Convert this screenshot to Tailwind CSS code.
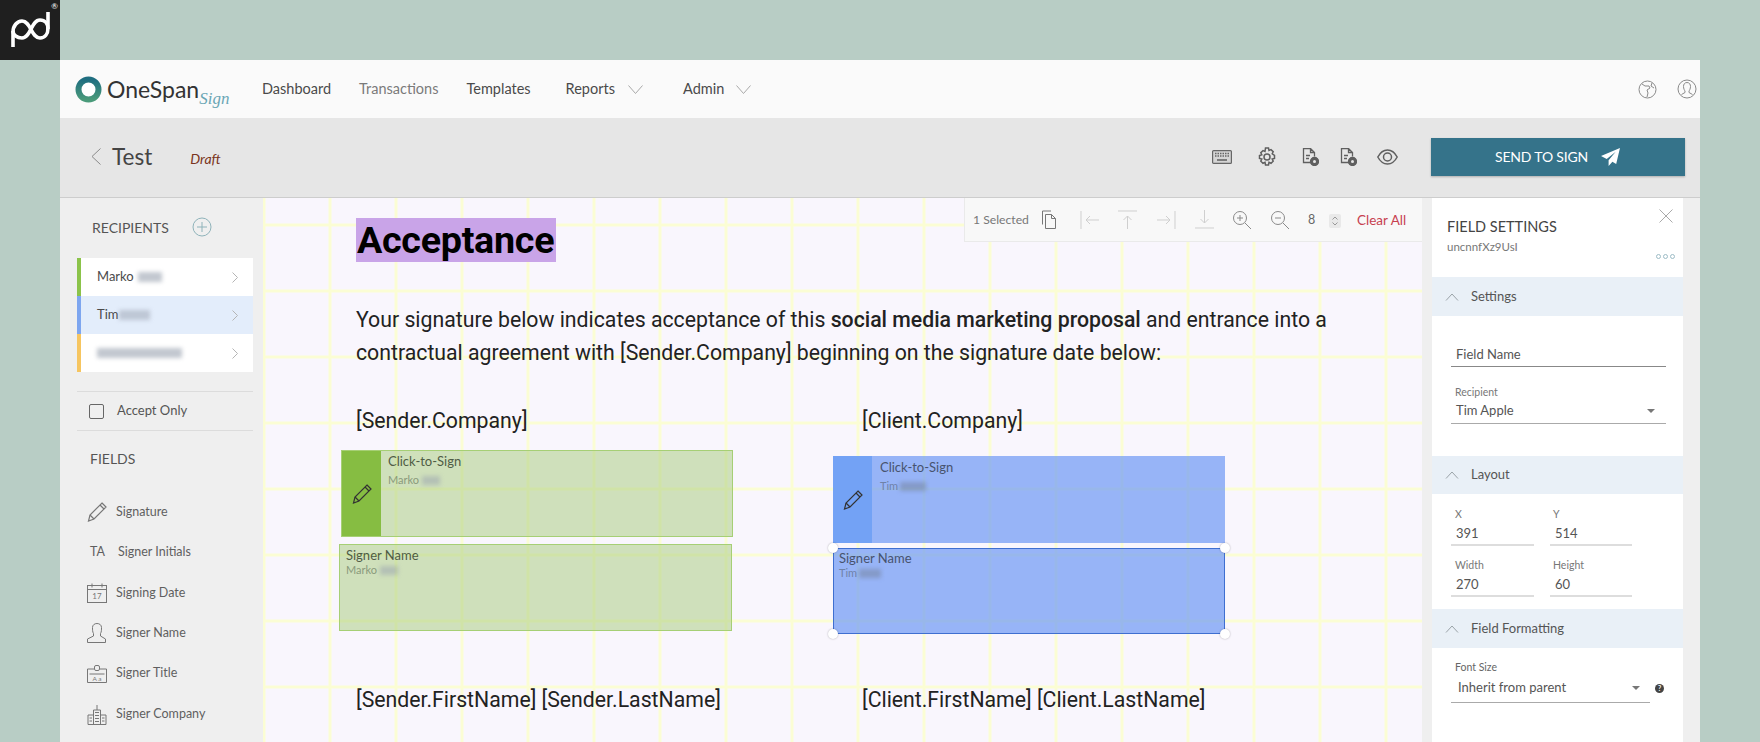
<!DOCTYPE html>
<html lang="en">
  <head>
    <meta charset="UTF-8" />
    <title>OneSpan Sign</title>
    <script src="https://cdn.jsdelivr.net/npm/@tailwindcss/browser@4"></script>
  </head>
  <body class="bg-[#b8cdc5] overflow-hidden font-['Lato','Liberation_Sans',sans-serif] text-[#4a4a4a]">
    <svg class="hidden">
      <symbol id="pencil" viewBox="0 0 20 20" fill="none" stroke="currentColor" stroke-width="1.2">
        <path d="M15 1l4 4L7 17l-5.500 2L3 13z" />
        <path d="M13 3l4 4M3 13l4 4" />
      </symbol>
      <symbol id="chev-up" viewBox="0 0 14 8" fill="none" stroke="#9aa3a8" stroke-width="1">
        <path d="M1 7.500L7 1l6 6.500" />
      </symbol>
    </svg>

    <div class="flex">
      <div class="relative w-[60px] h-[60px] bg-[#1f1f1f] shrink-0">
        <svg class="w-[60px] h-[60px]" viewBox="0 0 60 60" fill="none" stroke="#fff" stroke-width="3.600">
          <path d="M13 47V32c0-6 4-11 9-11 9 0 9 17 18 17 5 0 8-4 8-10V12" />
          <path d="M48 29c0-5-3-9-8-9-9 0-9 18-18 18-5 0-9-3-9-7" />
        </svg>
        <span class="absolute top-[1px] right-[2px] text-[8px] leading-[10px] text-white">®</span>
      </div>

      <main class="mt-[60px] w-[1640px] h-[682px] flex flex-col overflow-hidden">
        <!-- top nav -->
        <header class="h-[58px] bg-[#fafafa] flex items-center shrink-0 text-[14.5px]">
          <div class="w-[202px] pl-[15px] flex items-center shrink-0">
            <svg class="w-[27px] h-[27px] shrink-0" viewBox="0 0 27 27">
              <defs>
                <linearGradient id="ring" x1="0" y1="0" x2="0" y2="1">
                  <stop offset="0" stop-color="#1f6e80" />
                  <stop offset="1" stop-color="#4a9a7a" />
                </linearGradient>
              </defs>
              <circle cx="13.500" cy="13.500" r="10" fill="#fff" stroke="url(#ring)" stroke-width="6" />
            </svg>
            <span class="ml-[5px] text-[23px] leading-none text-[#333]">OneSpan</span>
            <span class="mt-[18px] font-['Liberation_Serif',serif] italic text-[17px] leading-none text-[#6aa6b5]">Sign</span>
          </div>
          <nav class="flex items-center">
            <a class="text-[#4a4a4a]">Dashboard</a>
            <a class="ml-[28px] text-[#7a7a7a]">Transactions</a>
            <a class="ml-[28px] text-[#4a4a4a]">Templates</a>
            <a class="ml-[35px] text-[#4a4a4a]">Reports</a>
            <svg class="ml-[13px] w-[15px] h-[9px]" viewBox="0 0 15 9" fill="none" stroke="#a8a8a8"><path d="M.5.5l7 8 7-8" /></svg>
            <a class="ml-[40px] text-[#4a4a4a]">Admin</a>
            <svg class="ml-[12px] w-[15px] h-[9px]" viewBox="0 0 15 9" fill="none" stroke="#a8a8a8"><path d="M.5.5l7 8 7-8" /></svg>
          </nav>
          <div class="ml-auto flex items-center gap-[20px] pr-[3px]">
            <svg class="w-[19px] h-[19px]" viewBox="0 0 19 19" fill="none" stroke="#8a8a8a">
              <circle cx="9.500" cy="9.500" r="8.500" />
              <path d="M4 4l3 2h4l1 2-3 2 1 3-1 4M14 3l-1 3 3 2" />
            </svg>
            <svg class="w-[20px] h-[20px]" viewBox="0 0 20 20" fill="none" stroke="#8a8a8a">
              <circle cx="10" cy="10" r="9" />
              <path d="M10 3.500c-2.500 0-3.500 2-3.500 4s1 4 1.500 4.500v1.500l-3.500 2M10 3.500c2.500 0 3.500 2 3.500 4s-1 4-1.500 4.500v1.500l3.500 2" />
            </svg>
          </div>
        </header>

        <!-- document bar -->
        <div class="h-[80px] pb-[2px] bg-[#e6e6e6] border-b border-[#cdcdcd] flex items-center shrink-0">
          <svg class="ml-[31px] w-[10px] h-[17px]" viewBox="0 0 10 17" fill="none" stroke="#8a8a8a"><path d="M9.500.5L1 8.500l8.500 8" /></svg>
          <span class="ml-[11px] mt-[2px] text-[22.5px] leading-none text-[#444]">Test</span>
          <span class="ml-[38px] mt-[4px] text-[14px] italic text-[#7a3420]">Draft</span>
          <div class="ml-auto flex items-center pr-[15.500px]">
            <svg class="w-[20px] h-[14px]" viewBox="0 0 20 14" fill="#d5d5d5" stroke="#666" stroke-width="1.200">
              <rect x=".6" y=".6" width="18.800" height="12.800" rx="1" />
              <path d="M3 3.500h14M3 6h14" stroke-dasharray="1.500 1" stroke-width="1.600" />
              <path d="M5 10h10" stroke-width="1.600" />
            </svg>
            <svg class="ml-[25px] w-[20px] h-[20px]" viewBox="0 0 20 20" fill="none" stroke="#5f5f5f" stroke-width="1.500">
              <circle cx="10" cy="10" r="3" />
              <path d="M8.500 1h3l.5 2.500 2-.9 2.200 2.100-1 2.100L17.500 8.500V11.500l-2.300.6 1 2.100-2.200 2.100-2-.9-.5 2.600h-3l-.5-2.600-2 .9-2.200-2.100 1-2.100-2.300-.6V8.500l2.300-.7-1-2.100 2.200-2.100 2 .9z" />
            </svg>
            <svg class="ml-[25px] w-[17px] h-[18px]" viewBox="0 0 17 18" fill="none" stroke="#5f5f5f" stroke-width="1.300">
              <path d="M10 14.500H1.500V.5h7l4 4v4M8.500.5v4h4M4 7.500h4M4 10.500h3" />
              <circle cx="12.500" cy="13.500" r="4" fill="#5f5f5f" />
              <circle cx="12.500" cy="13.500" r="1.500" fill="#e6e6e6" stroke="none" />
            </svg>
            <svg class="ml-[21px] w-[17px] h-[18px]" viewBox="0 0 17 18" fill="none" stroke="#5f5f5f" stroke-width="1.300">
              <path d="M10 14.500H1.500V.5h7l4 4v4M8.500.5v4h4M4 7.500h4M4 10.500h3" />
              <circle cx="12.500" cy="13.500" r="4" fill="#5f5f5f" />
              <circle cx="12.500" cy="13.500" r="1.500" fill="#e6e6e6" stroke="none" />
            </svg>
            <svg class="ml-[20px] w-[21px] h-[16px]" viewBox="0 0 21 16" fill="none" stroke="#5f5f5f" stroke-width="1.500">
              <path d="M.8 8C3.500 3 7 1 10.500 1S17.500 3 20.200 8c-2.700 5-6.200 7-9.700 7S3.500 13 .8 8z" />
              <circle cx="10.500" cy="8" r="4" />
            </svg>
            <button class="ml-[33px] w-[254px] h-[38px] bg-[#35738a] shadow-[0_1px_2px_rgba(0,0,0,0.25)] flex items-center justify-center text-white text-[14px]">
              <span class="tracking-[-0.2px]">SEND TO SIGN</span>
              <svg class="ml-[13px] w-[19px] h-[18px]" viewBox="0 0 20 19" fill="#fff"><path d="M20 0L0 8.500l6 3L15.500 4 8 13v6l4-4.500 4 2.500z" /></svg>
            </button>
          </div>
        </div>

        <div class="flex flex-1 min-h-0">
          <!-- left rail -->
          <aside class="w-[203px] shrink-0 bg-[#efefef]">
            <div class="h-[60px] pb-[2px] pl-[32px] flex items-center text-[14px] text-[#555]">
              RECIPIENTS
              <svg class="ml-[23px] w-[20px] h-[20px]" viewBox="0 0 20 20" fill="none" stroke="#8fb3ba"><circle cx="10" cy="10" r="9" /><path d="M10 5v10M5 10h10" /></svg>
            </div>
            <ul class="ml-[17px] w-[176px] text-[13px]">
              <li class="h-[38px] bg-white border-l-[4px] border-[#8bc34a] pl-[16px] pr-[15px] flex items-center">
                Marko <span class="ml-[4px] w-[24px] h-[10px] bg-gray-400/60 blur-[2px]"></span>
                <svg class="ml-auto w-[6px] h-[11px]" viewBox="0 0 6 11" fill="none" stroke="#b5b5b5"><path d="M.5.5l5 5-5 5" /></svg>
              </li>
              <li class="h-[38px] bg-[#e3edfb] border-l-[4px] border-[#7ea6ef] pl-[16px] pr-[15px] flex items-center">
                Tim <span class="ml-[1px] w-[31px] h-[10px] bg-gray-400/50 blur-[2px]"></span>
                <svg class="ml-auto w-[6px] h-[11px]" viewBox="0 0 6 11" fill="none" stroke="#b5b5b5"><path d="M.5.5l5 5-5 5" /></svg>
              </li>
              <li class="h-[38px] bg-white border-l-[4px] border-[#f6c560] pl-[16px] pr-[15px] flex items-center">
                <span class="w-[85px] h-[10px] bg-gray-400/60 blur-[2px]"></span>
                <svg class="ml-auto w-[6px] h-[11px]" viewBox="0 0 6 11" fill="none" stroke="#b5b5b5"><path d="M.5.5l5 5-5 5" /></svg>
              </li>
            </ul>
            <div class="ml-[17px] w-[176px] mt-[19px] h-[40px] border-y border-[#dcdcdc] flex items-center pl-[12px] text-[13px] text-[#555]">
              <span class="w-[15px] h-[15px] border-[1.500px] border-[#666] rounded-[2px]"></span>
              <span class="ml-[13px]">Accept Only</span>
            </div>
            <div class="h-[58px] pb-[4px] pl-[30px] flex items-center text-[14px] text-[#555]">FIELDS</div>
            <ul class="mt-[3px] pl-[27px] text-[12.500px] text-[#5f5f5f]">
              <li class="h-[40.400px] flex items-center">
                <svg class="w-[20px] h-[20px] text-[#777]"><use href="#pencil" /></svg>
                <span class="ml-[9px]">Signature</span>
              </li>
              <li class="h-[40.400px] flex items-center">
                <span class="ml-[3px] w-[28px]">TA</span>
                <span>Signer Initials</span>
              </li>
              <li class="h-[40.400px] flex items-center">
                <svg class="w-[20px] h-[20px]" viewBox="0 0 20 20" fill="none" stroke="#777">
                  <rect x=".5" y="2.500" width="19" height="17" />
                  <path d="M.5 6.500h19M5 .5v4M15 .5v4" />
                  <text x="10" y="16" text-anchor="middle" font-size="8" fill="#777" stroke="none">17</text>
                </svg>
                <span class="ml-[9px]">Signing Date</span>
              </li>
              <li class="h-[40.400px] flex items-center">
                <svg class="w-[20px] h-[20px]" viewBox="0 0 20 20" fill="none" stroke="#777">
                  <path d="M6.500 10.500c-1-1.500-1-4-1-6 0-2.500 2-4 4.500-4s4.500 1.500 4.500 4c0 2 0 4.500-1 6v2.500l5 3v3.500H.5V16l6-3z" />
                </svg>
                <span class="ml-[9px]">Signer Name</span>
              </li>
              <li class="h-[40.400px] flex items-center">
                <svg class="w-[20px] h-[18px]" viewBox="0 0 20 18" fill="none" stroke="#777">
                  <path d="M7 4H.5v13.500h19V4H13" />
                  <rect x="7.500" y=".5" width="5" height="5" rx="1.500" />
                  <path d="M2.500 9h15" />
                  <text x="10" y="15.500" text-anchor="middle" font-size="6.500" fill="#777" stroke="none">A a</text>
                </svg>
                <span class="ml-[9px]">Signer Title</span>
              </li>
              <li class="h-[40.400px] flex items-center">
                <svg class="w-[20px] h-[21px]" viewBox="0 0 20 21" fill="none" stroke="#777">
                  <path d="M6.500 20.500V6h7v14.500M10 1v5M8 8.500h4M8 11.500h4M8 14.500h4M8 17.500h4" />
                  <path d="M6.500 11H1v9.500h18V11h-5.500M2.500 14h2.500M2.500 17h2.500M15 14h2.500M15 17h2.500" />
                </svg>
                <span class="ml-[9px]">Signer Company</span>
              </li>
            </ul>
          </aside>

          <!-- document canvas -->
          <section class="relative w-[1159px] shrink-0 overflow-hidden bg-[#f9f6fd] bg-[linear-gradient(to_right,#fbfdd4_3px,transparent_3px),linear-gradient(to_bottom,#fbfdd4_3px,transparent_3px)] bg-[size:66px_66px] bg-[position:-0.5px_25.5px] pl-[93px] pt-[20px] font-['Roboto',sans-serif] text-[#222]">
            <h1 class="inline-block align-top h-[44px] pl-[1px] pr-[2px] bg-[#c9a4e8] font-['Roboto',sans-serif] font-bold text-[37.700px] leading-[44px] tracking-[-0.3px] text-black">Acceptance</h1>
            <p class="mt-[40.500px] text-[21.250px] leading-[33px]">
              Your signature below indicates acceptance of this <b class="font-medium">social media marketing proposal</b> and entrance into a<br />
              contractual agreement with [Sender.Company] beginning on the signature date below:
            </p>
            <div class="mt-[35px] grid grid-cols-[506px_1fr] text-[21.250px] leading-[33px]">
              <span>[Sender.Company]</span>
              <span>[Client.Company]</span>
            </div>
            <div class="mt-[246px] grid grid-cols-[506px_1fr] text-[21.250px] leading-[33px]">
              <span>[Sender.FirstName] [Sender.LastName]</span>
              <span>[Client.FirstName] [Client.LastName]</span>
            </div>

            <!-- placed signature fields -->
            <div class="absolute left-[78px] top-[252px] w-[392px] h-[87px] bg-[#a5c97a]/50 border border-[#a6cf75] flex font-['Lato',sans-serif]">
              <div class="w-[39px] shrink-0 bg-[#86bd42] flex items-center justify-center text-[#333]">
                <svg class="w-[20px] h-[20px]"><use href="#pencil" /></svg>
              </div>
              <div class="pl-[7px] pt-[2px]">
                <div class="text-[13px] leading-[16px] text-[#4f5c45]">Click-to-Sign</div>
                <div class="mt-[3px] text-[11px] leading-[16px] text-[#8a9a7c] flex items-center">Marko <span class="ml-[3px] w-[18px] h-[9px] bg-gray-400/50 blur-[2px]"></span></div>
              </div>
            </div>
            <div class="absolute left-[76px] top-[346px] w-[393px] h-[87px] bg-[#a5c97a]/50 border border-[#a6cf75] pl-[6px] pt-[2px] font-['Lato',sans-serif]">
              <div class="text-[13px] leading-[16px] text-[#4f5c45]">Signer Name</div>
              <div class="text-[11px] leading-[14px] text-[#8a9a7c] flex items-center">Marko <span class="ml-[3px] w-[18px] h-[9px] bg-gray-400/50 blur-[2px]"></span></div>
            </div>

            <div class="absolute left-[570px] top-[258px] w-[392px] h-[87px] bg-[#6d98f4]/70 flex font-['Lato',sans-serif]">
              <div class="w-[39px] shrink-0 bg-[#73a2f5] flex items-center justify-center text-[#333]">
                <svg class="w-[20px] h-[20px]"><use href="#pencil" /></svg>
              </div>
              <div class="pl-[8px] pt-[3px]">
                <div class="text-[13px] leading-[16px] text-[#47536e]">Click-to-Sign</div>
                <div class="mt-[3px] text-[11px] leading-[16px] text-[#6f82a8] flex items-center">Tim <span class="ml-[2px] w-[26px] h-[9px] bg-gray-500/40 blur-[2px]"></span></div>
              </div>
            </div>
            <div class="absolute left-[570px] top-[350px] w-[392px] h-[86px] bg-[#6d98f4]/70 border-[1.500px] border-[#3f6fd0] pl-[5px] pt-[1px] font-['Lato',sans-serif]">
              <div class="text-[13px] leading-[16px] text-[#47536e]">Signer Name</div>
              <div class="text-[11px] leading-[14px] text-[#6f82a8] flex items-center">Tim <span class="ml-[2px] w-[22px] h-[9px] bg-gray-500/40 blur-[2px]"></span></div>
              <span class="absolute -left-[6px] -top-[6px] w-[10px] h-[10px] rounded-full bg-white shadow-[0_0_2px_rgba(0,0,0,0.3)]"></span>
              <span class="absolute -right-[6px] -top-[6px] w-[10px] h-[10px] rounded-full bg-white shadow-[0_0_2px_rgba(0,0,0,0.3)]"></span>
              <span class="absolute -left-[6px] -bottom-[6px] w-[10px] h-[10px] rounded-full bg-white shadow-[0_0_2px_rgba(0,0,0,0.3)]"></span>
              <span class="absolute -right-[6px] -bottom-[6px] w-[10px] h-[10px] rounded-full bg-white shadow-[0_0_2px_rgba(0,0,0,0.3)]"></span>
            </div>

            <!-- floating selection toolbar -->
            <div class="absolute top-0 right-0 w-[458px] h-[44px] bg-[#f8f8f8] border-l border-b border-[#eaeaea] flex items-center pl-[8px] font-['Lato',sans-serif] text-[#777]">
              <span class="mt-[2px] text-[12.200px] w-[59px]">1 Selected</span>
              <svg class="ml-[9px] w-[16px] h-[19px]" viewBox="0 0 16 19" fill="none" stroke="#777"><path d="M10 1H1.500v13.500M4.500 4.500h6l4 4v10h-10zM10.500 4.500v4h4" /></svg>
              <svg class="ml-[23px] w-[20px] h-[18px]" viewBox="0 0 20 18" fill="none" stroke="#cfcfcf"><path d="M1 0v18M19 9H6M10 5L6 9l4 4" /></svg>
              <svg class="ml-[18px] w-[19px] h-[19px]" viewBox="0 0 19 19" fill="none" stroke="#cfcfcf"><path d="M0 1h19M9.500 19V6M5.500 10l4-4 4 4" /></svg>
              <svg class="ml-[19px] w-[20px] h-[18px]" viewBox="0 0 20 18" fill="none" stroke="#cfcfcf"><path d="M19 0v18M1 9h13M10 5l4 4-4 4" /></svg>
              <svg class="ml-[19px] w-[19px] h-[19px]" viewBox="0 0 19 19" fill="none" stroke="#cfcfcf"><path d="M0 18h19M9.500 0v13M5.500 9l4 4 4-4" /></svg>
              <svg class="ml-[18px] w-[20px] h-[20px]" viewBox="0 0 20 20" fill="none" stroke="#8a8a8a"><circle cx="8" cy="8" r="6.500" /><path d="M13 13l6 6M8 5v6M5 8h6" /></svg>
              <svg class="ml-[18px] w-[20px] h-[20px]" viewBox="0 0 20 20" fill="none" stroke="#8a8a8a"><circle cx="8" cy="8" r="6.500" /><path d="M13 13l6 6M5 8h6" /></svg>
              <span class="ml-[18px] mt-[2px] w-[7px] text-[12.500px] text-[#666]">8</span>
              <span class="ml-[14px] mt-[2px] w-[12px] h-[14px] rounded-[2px] bg-[#e9e9e9] flex items-center justify-center">
                <svg class="w-[6px] h-[10px]" viewBox="0 0 6 10" fill="none" stroke="#999"><path d="M.5 3.500L3 1l2.500 2.500M.5 6.500L3 9l2.500-2.500" /></svg>
              </span>
              <span class="ml-[16px] mt-[1px] text-[13.500px] text-[#c7404f]">Clear All</span>
            </div>
          </section>

          <!-- field settings -->
          <aside class="w-[278px] shrink-0 bg-[#efefef] pl-[10px] pr-[17px]">
            <div class="relative h-full bg-white text-[#555]">
              <div class="h-[79px] pl-[15px] pt-[20px]">
                <div class="text-[14.500px] leading-[18px] text-[#444]">FIELD SETTINGS</div>
                <div class="mt-[3px] text-[11.500px] leading-[16px] text-[#777]">uncnnfXz9UsI</div>
              </div>
              <svg class="absolute left-[227px] top-[11px] w-[14px] h-[14px]" viewBox="0 0 14 14" fill="none" stroke="#aaa"><path d="M.5.5l13 13M13.500.5l-13 13" /></svg>
              <div class="absolute left-[224px] top-[56px] flex gap-[2px]">
                <span class="w-[5px] h-[5px] rounded-full border border-[#9dbcc6]"></span>
                <span class="w-[5px] h-[5px] rounded-full border border-[#9dbcc6]"></span>
                <span class="w-[5px] h-[5px] rounded-full border border-[#9dbcc6]"></span>
              </div>

              <div class="h-[39px] bg-[#e9f0f7] flex items-center pl-[13px] text-[13px]">
                <svg class="w-[14px] h-[8px]"><use href="#chev-up" /></svg>
                <span class="ml-[12px]">Settings</span>
              </div>
              <div class="h-[140px] pl-[19px] pr-[17px] text-[13px]">
                <div class="pt-[25px]">
                  <div class="h-[26px] pl-[5px] border-b border-[#888] leading-[26px]">Field Name</div>
                </div>
                <div class="mt-[19px] pl-[4px] text-[10.500px] leading-[12px] text-[#777]">Recipient</div>
                <div class="mt-[1px] h-[25px] pl-[5px] pr-[11px] border-b border-[#aaa] flex items-center justify-between">
                  Tim Apple
                  <span class="border-x-[4px] border-t-[4px] border-x-transparent border-t-[#777]"></span>
                </div>
              </div>

              <div class="h-[38px] bg-[#e9f0f7] flex items-center pl-[13px] text-[13px]">
                <svg class="w-[14px] h-[8px]"><use href="#chev-up" /></svg>
                <span class="ml-[12px]">Layout</span>
              </div>
              <div class="h-[115px] pl-[19px] grid grid-cols-[83px_82px] gap-x-[16px] content-start text-[13px]">
                <div class="pt-[14px]">
                  <div class="pl-[4px] text-[10.500px] leading-[12px] text-[#777]">X</div>
                  <div class="mt-[1px] h-[25px] pl-[5px] leading-[24px] border-b-2 border-[#ddd]">391</div>
                </div>
                <div class="pt-[14px]">
                  <div class="pl-[3px] text-[10.500px] leading-[12px] text-[#777]">Y</div>
                  <div class="mt-[1px] h-[25px] pl-[5px] leading-[24px] border-b-2 border-[#ddd]">514</div>
                </div>
                <div class="pt-[13px]">
                  <div class="pl-[4px] text-[10.500px] leading-[12px] text-[#777]">Width</div>
                  <div class="mt-[1px] h-[25px] pl-[5px] leading-[24px] border-b-2 border-[#ddd]">270</div>
                </div>
                <div class="pt-[13px]">
                  <div class="pl-[3px] text-[10.500px] leading-[12px] text-[#777]">Height</div>
                  <div class="mt-[1px] h-[25px] pl-[5px] leading-[24px] border-b-2 border-[#ddd]">60</div>
                </div>
              </div>

              <div class="h-[39px] bg-[#e9f0f7] flex items-center pl-[13px] text-[13px]">
                <svg class="w-[14px] h-[8px]"><use href="#chev-up" /></svg>
                <span class="ml-[12px]">Field Formatting</span>
              </div>
              <div class="pl-[19px] text-[13px]">
                <div class="pt-[13px] pl-[4px] text-[10.500px] leading-[12px] text-[#666]">Font Size</div>
                <div class="flex items-center">
                  <div class="mt-[1px] w-[199px] h-[29px] pl-[7px] pr-[10px] border-b border-[#aaa] flex items-center justify-between">
                    Inherit from parent
                    <span class="border-x-[4px] border-t-[4px] border-x-transparent border-t-[#777]"></span>
                  </div>
                  <span class="ml-[5px] w-[9px] h-[9px] rounded-full bg-[#444] text-white text-[7px] leading-[9px] text-center font-bold">?</span>
                </div>
              </div>
            </div>
          </aside>
        </div>
      </main>
    </div>
  </body>
</html>
